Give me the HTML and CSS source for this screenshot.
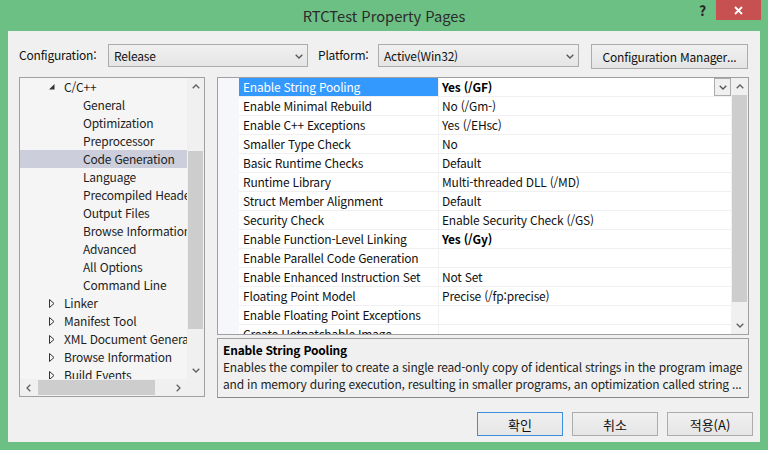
FILE: index.html
```html
<!DOCTYPE html>
<html lang="ko">
<head>
<meta charset="utf-8">
<title>RTCTest Property Pages</title>
<link rel="stylesheet" href="styles.css">
</head>
<body>
<div class="window">
  <div class="titlebar">
    <div class="title">RTCTest Property Pages</div>
    <span class="help">?</span>
    <span class="close"><svg width="9" height="9" viewBox="0 0 9 9"><path d="M1 1 L8 8 M8 1 L1 8" stroke="#fff" stroke-width="1.8" fill="none"/></svg></span>
  </div>
  <div class="client">
    <div class="toolbar">
      <span class="lbl lbl-config">Configuration:</span>
      <div class="select sel-config"><span>Release</span><svg class="chev" width="8" height="5" viewBox="0 0 8 5"><polyline points="0.7,0.7 4,4 7.3,0.7" fill="none" stroke="#555" stroke-width="1.3"/></svg></div>
      <span class="lbl lbl-platform">Platform:</span>
      <div class="select sel-platform"><span>Active(Win32)</span><svg class="chev" width="8" height="5" viewBox="0 0 8 5"><polyline points="0.7,0.7 4,4 7.3,0.7" fill="none" stroke="#555" stroke-width="1.3"/></svg></div>
      <div class="btn btn-cm">Configuration Manager...</div>
    </div>
    <div class="main">
      <div class="tree">
        <div class="tree-body">
          <div class="tree-items">
            <div class="node lvl1"><svg class="tri" width="6" height="6" viewBox="0 0 6 6"><polygon points="5.5,0 5.5,5.5 0,5.5" fill="#333"/></svg><span>C/C++</span></div>
            <div class="node lvl2">General</div>
            <div class="node lvl2">Optimization</div>
            <div class="node lvl2">Preprocessor</div>
            <div class="node lvl2 selected">Code Generation</div>
            <div class="node lvl2">Language</div>
            <div class="node lvl2">Precompiled Headers</div>
            <div class="node lvl2">Output Files</div>
            <div class="node lvl2">Browse Information</div>
            <div class="node lvl2">Advanced</div>
            <div class="node lvl2">All Options</div>
            <div class="node lvl2">Command Line</div>
            <div class="node lvl1"><svg class="tri" width="6" height="9" viewBox="0 0 6 9"><polygon points="0.5,0.5 5,4.5 0.5,8.5" fill="none" stroke="#333" stroke-width="1"/></svg><span>Linker</span></div>
            <div class="node lvl1"><svg class="tri" width="6" height="9" viewBox="0 0 6 9"><polygon points="0.5,0.5 5,4.5 0.5,8.5" fill="none" stroke="#333" stroke-width="1"/></svg><span>Manifest Tool</span></div>
            <div class="node lvl1"><svg class="tri" width="6" height="9" viewBox="0 0 6 9"><polygon points="0.5,0.5 5,4.5 0.5,8.5" fill="none" stroke="#333" stroke-width="1"/></svg><span>XML Document Generator</span></div>
            <div class="node lvl1"><svg class="tri" width="6" height="9" viewBox="0 0 6 9"><polygon points="0.5,0.5 5,4.5 0.5,8.5" fill="none" stroke="#333" stroke-width="1"/></svg><span>Browse Information</span></div>
            <div class="node lvl1"><svg class="tri" width="6" height="9" viewBox="0 0 6 9"><polygon points="0.5,0.5 5,4.5 0.5,8.5" fill="none" stroke="#333" stroke-width="1"/></svg><span>Build Events</span></div>
          </div>
          <div class="vscroll tree-vscroll">
            <div class="sbtn"><svg width="8" height="5" viewBox="0 0 8 5"><polyline points="0.7,4.3 4,1 7.3,4.3" fill="none" stroke="#606060" stroke-width="1.3"/></svg></div>
            <div class="track"><div class="thumb tree-vthumb"></div></div>
            <div class="sbtn"><svg width="8" height="5" viewBox="0 0 8 5"><polyline points="0.7,0.7 4,4 7.3,0.7" fill="none" stroke="#606060" stroke-width="1.3"/></svg></div>
          </div>
        </div>
        <div class="hrow">
          <div class="hscroll">
            <div class="sbtn"><svg width="5" height="8" viewBox="0 0 5 8"><polyline points="4.3,0.7 1,4 4.3,7.3" fill="none" stroke="#606060" stroke-width="1.3"/></svg></div>
            <div class="htrack"><div class="hthumb"></div></div>
            <div class="sbtn"><svg width="5" height="8" viewBox="0 0 5 8"><polyline points="0.7,0.7 4,4 0.7,7.3" fill="none" stroke="#606060" stroke-width="1.3"/></svg></div>
          </div>
          <div class="corner"></div>
        </div>
      </div>
      <div class="right">
        <div class="grid">
          <div class="gutter"></div>
          <div class="rows">
            <div class="row"><div class="name sel">Enable String Pooling</div><div class="value bold">Yes (/GF)<span class="dd"><svg width="8" height="5" viewBox="0 0 8 5"><polyline points="0.7,0.7 4,4 7.3,0.7" fill="none" stroke="#555" stroke-width="1.3"/></svg></span></div></div>
            <div class="row"><div class="name">Enable Minimal Rebuild</div><div class="value">No (/Gm-)</div></div>
            <div class="row"><div class="name">Enable C++ Exceptions</div><div class="value">Yes (/EHsc)</div></div>
            <div class="row"><div class="name">Smaller Type Check</div><div class="value">No</div></div>
            <div class="row"><div class="name">Basic Runtime Checks</div><div class="value">Default</div></div>
            <div class="row"><div class="name">Runtime Library</div><div class="value">Multi-threaded DLL (/MD)</div></div>
            <div class="row"><div class="name">Struct Member Alignment</div><div class="value">Default</div></div>
            <div class="row"><div class="name">Security Check</div><div class="value">Enable Security Check (/GS)</div></div>
            <div class="row"><div class="name">Enable Function-Level Linking</div><div class="value bold">Yes (/Gy)</div></div>
            <div class="row"><div class="name">Enable Parallel Code Generation</div><div class="value"></div></div>
            <div class="row"><div class="name">Enable Enhanced Instruction Set</div><div class="value">Not Set</div></div>
            <div class="row"><div class="name">Floating Point Model</div><div class="value">Precise (/fp:precise)</div></div>
            <div class="row"><div class="name">Enable Floating Point Exceptions</div><div class="value"></div></div>
            <div class="row"><div class="name">Create Hotpatchable Image</div><div class="value"></div></div>
          </div>
          <div class="vscroll grid-vscroll">
            <div class="sbtn"><svg width="8" height="5" viewBox="0 0 8 5"><polyline points="0.7,4.3 4,1 7.3,4.3" fill="none" stroke="#606060" stroke-width="1.3"/></svg></div>
            <div class="track"><div class="thumb grid-vthumb"></div></div>
            <div class="sbtn"><svg width="8" height="5" viewBox="0 0 8 5"><polyline points="0.7,0.7 4,4 7.3,0.7" fill="none" stroke="#606060" stroke-width="1.3"/></svg></div>
          </div>
        </div>
        <div class="desc">
          <div class="desc-title">Enable String Pooling</div>
          <div class="desc-line">Enables the compiler to create a single read-only copy of identical strings in the program image</div>
          <div class="desc-line">and in memory during execution, resulting in smaller programs, an optimization called string ...</div>
        </div>
      </div>
    </div>
    <div class="buttons">
      <div class="btn dlg default">확인</div>
      <div class="btn dlg">취소</div>
      <div class="btn dlg">적용(A)</div>
    </div>
  </div>
</div>
</body>
</html>
```

FILE: styles.css
```css
* { box-sizing: border-box; }

body {
  margin: 0;
  width: 768px;
  height: 450px;
  overflow: hidden;
  background: #6dc084;
  font-family: "Noto Sans CJK KR", "Noto Sans", sans-serif;
  font-size: 12px;
  letter-spacing: -0.2px;
  color: #1e1e1e;
}

.window {
  width: 768px;
  height: 450px;
  display: flex;
  flex-direction: column;
}

.titlebar {
  height: 31px;
  flex: none;
  position: relative;
  display: flex;
  justify-content: center;
  align-items: center;
}

.title {
  font-size: 14.7px;
  letter-spacing: 0;
  color: #2b2b2b;
  line-height: 1;
  margin-top: 1px;
}

.help {
  position: absolute;
  left: 699px;
  top: 1px;
  font-size: 14px;
  font-weight: bold;
  color: #262626;
  line-height: 18px;
}

.close {
  position: absolute;
  left: 716px;
  top: 0;
  width: 45px;
  height: 20px;
  background: #c75050;
  display: flex;
  align-items: center;
  justify-content: center;
}

.client {
  margin: 0 8px;
  height: 411px;
  background: #f0f0f0;
  display: flex;
  flex-direction: column;
}

/* toolbar */
.toolbar {
  display: flex;
  align-items: flex-start;
  margin-top: 13px;
  padding-left: 11px;
  height: 25px;
  flex: none;
}

.lbl {
  height: 23px;
  line-height: 22px;
  color: #111;
}
.lbl-config { width: 89px; }
.lbl-platform { width: 60px; margin-left: 10px; }

.select {
  height: 23px;
  border: 1px solid #acacac;
  background: linear-gradient(#f0f0f0, #e5e5e5);
  display: flex;
  align-items: center;
  justify-content: space-between;
  padding: 0 4px 0 5px;
  color: #111;
}
.sel-config { width: 200px; }
.sel-platform { width: 201px; }
.chev { margin-top: 1px; }

.btn {
  border: 1px solid #acacac;
  background: linear-gradient(#f0f0f0, #e5e5e5);
  display: flex;
  align-items: center;
  justify-content: center;
  color: #111;
}
.btn-cm {
  width: 157px;
  height: 25px;
  margin-left: 12px;
}

/* main */
.main {
  display: flex;
  gap: 12px;
  margin-top: 8px;
  padding-left: 11px;
  flex: none;
}

.tree {
  width: 186px;
  height: 320px;
  border: 1px solid #a0a0a0;
  background: #f5f5f5;
  display: flex;
  flex-direction: column;
}

.tree-body {
  display: flex;
  height: 301px;
}

.tree-items {
  width: 167px;
  overflow: hidden;
}

.node {
  height: 18px;
  line-height: 18px;
  white-space: nowrap;
  display: flex;
  align-items: center;
  color: #1e1e1e;
}
.lvl1 { padding-left: 29px; }
.lvl1 .tri { width: 6px; flex: none; }
.lvl1 span { margin-left: 9px; }
.lvl2 { padding-left: 63px; }
.node.selected { background: #cccedb; }

.vscroll {
  width: 17px;
  flex: none;
  display: flex;
  flex-direction: column;
  background: #f0f0f0;
}
.sbtn {
  width: 17px;
  height: 17px;
  flex: none;
  display: flex;
  align-items: center;
  justify-content: center;
}
.track {
  flex: 1;
  display: flex;
  flex-direction: column;
}
.thumb {
  margin: 0 1px;
  background: #cdcdcd;
}
.tree-vthumb { margin-top: 56px; height: 178px; }
.grid-vthumb { margin-top: 0; height: 207px; }

.hrow {
  display: flex;
  height: 17px;
}
.hscroll {
  width: 167px;
  display: flex;
  background: #f0f0f0;
}
.htrack {
  flex: 1;
  display: flex;
  align-items: center;
}
.hthumb {
  margin-left: 1px;
  width: 117px;
  height: 15px;
  background: #cdcdcd;
}
.corner {
  width: 17px;
  background: #f0f0f0;
}

.right {
  display: flex;
  flex-direction: column;
  gap: 3px;
}

.grid {
  width: 532px;
  height: 258px;
  border: 1px solid #a0a0a0;
  background: #fff;
  display: flex;
}
.gutter {
  width: 21px;
  flex: none;
  background: #f5f7fa;
}
.rows {
  width: 492px;
  flex: none;
  overflow: hidden;
}
.row {
  display: flex;
  height: 19px;
  border-bottom: 1px solid #f0f0f3;
}
.name {
  width: 200px;
  flex: none;
  padding-left: 4px;
  line-height: 18px;
  white-space: nowrap;
  overflow: hidden;
  border-right: 1px solid #f0f0f3;
  color: #111;
}
.name.sel {
  background: #3399ff;
  color: #fff;
}
.value {
  flex: 1;
  padding-left: 3px;
  line-height: 18px;
  white-space: nowrap;
  display: flex;
  justify-content: space-between;
  color: #111;
}
.bold { font-weight: bold; color: #000; }
.dd {
  width: 17px;
  height: 18px;
  border: 1px solid #acacac;
  background: #f0f0f0;
  display: flex;
  align-items: center;
  justify-content: center;
}

.desc {
  width: 532px;
  height: 60px;
  border: 1px solid #a0a0a0;
  border-bottom-color: #8a8a8a;
  background: #f0f0f0;
  padding: 2px 0 0 5px;
  overflow: hidden;
}
.desc-title {
  font-weight: bold;
  line-height: 17px;
  color: #000;
}
.desc-line {
  line-height: 17px;
  white-space: nowrap;
  color: #1e1e1e;
}

.buttons {
  display: flex;
  justify-content: flex-end;
  gap: 9px;
  padding-right: 7px;
  margin-top: 14px;
}
.btn.dlg {
  width: 86px;
  height: 24px;
  font-size: 13px;
  letter-spacing: 0;
}
.btn.default {
  border-color: #3c8fdd;
}
```
